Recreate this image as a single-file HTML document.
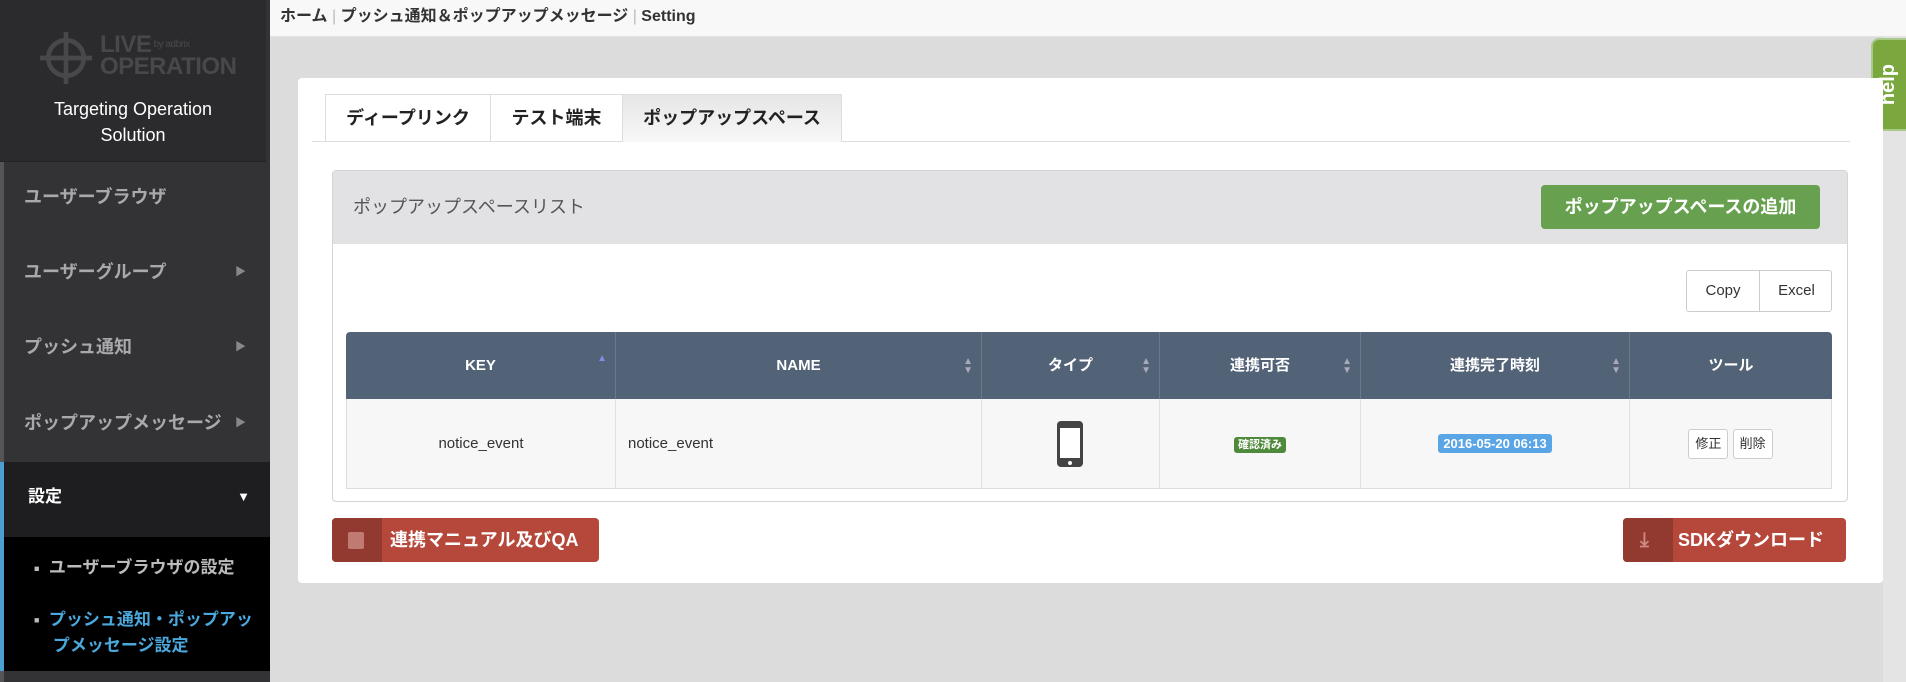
<!DOCTYPE html>
<html><head><meta charset="utf-8"><style>
*{box-sizing:border-box;margin:0;padding:0}
body{width:1906px;height:682px;overflow:hidden;background:#dcdcdd;font-family:"Liberation Sans","Noto Sans CJK JP",sans-serif;position:relative}
.abs{position:absolute}
#side{left:0;top:0;width:270px;height:682px;background:#333336;border-left:4px solid #555}
#logo{left:0;top:0;width:266px;height:162px;background:#2b2b2d;border-bottom:1px solid #222;color:#fff;text-align:center}
.mi{left:0;width:266px;height:75px;color:#a9a9ab;font-weight:bold;font-size:18px;padding-left:24px;line-height:75px}
.arr{position:absolute;right:20px;top:0;font-size:11px;color:#888}
#top{left:270px;top:0;width:1636px;height:37px;background:#f8f8f8;border-bottom:1px solid #e2e2e2;font-size:16px;font-weight:bold;color:#333;line-height:34px;padding-left:10px}
#card{left:298px;top:78px;width:1585px;height:505px;background:#fff;border-radius:4px}
.tab{top:94px;height:47px;border:1px solid #ddd;border-bottom:none;font-size:18px;font-weight:bold;color:#222;text-align:center;line-height:47px;background:#fff}
#panel{left:332px;top:170px;width:1516px;height:332px;border:1px solid #d4d4d4;border-radius:4px;background:#fff}
.hd{top:332px;height:67px;background:#526378;color:#fff;font-weight:bold;font-size:15px;line-height:67px;text-align:center}
.rw{top:399px;height:90px;background:#f7f7f7;font-size:15px;color:#333;line-height:90px;text-align:center;border-bottom:1px solid #ddd}
.sort{position:absolute;right:8px;top:0;font-size:10px;color:#aab;line-height:9px;padding-top:25px}
.btn{color:#fff;font-size:18px;font-weight:bold;border-radius:4px}
</style></head><body>
<div id="side" class="abs"></div>
<div id="logo" class="abs">
 <svg class="abs" style="left:38px;top:30px" width="56" height="56" viewBox="0 0 60 60"><circle cx="30" cy="30" r="19" fill="none" stroke="#48484a" stroke-width="5"/><path d="M30 2V58M2 30H58" stroke="#48484a" stroke-width="5"/><circle cx="30" cy="30" r="2" fill="#48484a"/></svg>
 <div class="abs" style="left:100px;top:34px;color:#48484a;font-weight:bold;font-size:24px;line-height:22px;text-align:left;letter-spacing:-0.5px">LIVE<span style="font-size:10px;font-weight:normal;vertical-align:top"> by adbrix</span><br>OPERATION</div>
 <div class="abs" style="left:0;top:96px;width:266px;font-size:18px;line-height:26px">Targeting Operation<br>Solution</div>
</div>
<div class="abs mi" style="top:160px">ユーザーブラウザ</div>
<div class="abs mi" style="top:235px">ユーザーグループ<span class="arr">▶</span></div>
<div class="abs mi" style="top:310px">プッシュ通知<span class="arr">▶</span></div>
<div class="abs mi" style="top:386px">ポップアップメッセージ<span class="arr">▶</span></div>
<div class="abs" style="left:0;top:462px;width:270px;height:75px;background:#1e1e20;border-left:4px solid #4aa0d0;color:#fff;font-weight:bold;font-size:17px;line-height:70px;padding-left:24px">設定<span style="position:absolute;right:20px;font-size:13px">▼</span></div>
<div class="abs" style="left:0;top:537px;width:270px;height:134px;background:#000;border-left:4px solid #4aa0d0;font-weight:bold;font-size:17px">
 <div class="abs" style="left:30px;top:16px;color:#bbb"><span style="font-size:9px;vertical-align:middle">■</span>&nbsp; ユーザーブラウザの設定</div>
 <div class="abs" style="left:30px;top:70px;color:#4aa8dd;line-height:25px;width:240px;white-space:nowrap;overflow:hidden"><span style="font-size:9px;color:#bbb;vertical-align:middle">■</span>&nbsp; プッシュ通知・ポップアッ<br>&nbsp;&nbsp;&nbsp;&nbsp;プメッセージ設定</div>
</div>
<div id="top" class="abs">ホーム <span style="color:#bbb;font-weight:normal">|</span> プッシュ通知＆ポップアップメッセージ <span style="color:#bbb;font-weight:normal">|</span> Setting</div>
<div class="abs" style="left:1883px;top:37px;width:23px;height:645px;background:#e4e4e4"></div>
<div class="abs" style="left:1871px;top:38px;width:40px;height:93px;background:#7aa83e;border:2px solid #a8c98a;border-radius:8px 0 0 8px;display:flex;align-items:center;justify-content:center;padding-right:6px"><span style="writing-mode:vertical-rl;transform:rotate(180deg);color:#fff;font-weight:bold;font-size:20px">help</span></div>
<div id="card" class="abs"></div>
<div class="abs" style="left:312px;top:141px;width:1538px;height:1px;background:#ddd"></div>
<div class="abs tab" style="left:325px;width:166px">ディープリンク</div>
<div class="abs tab" style="left:490px;width:133px">テスト端末</div>
<div class="abs tab" style="left:622px;width:220px;background:linear-gradient(#e6e6e6,#f8f8f8);height:48px">ポップアップスペース</div>
<div id="panel" class="abs"><div style="height:73px;background:#e2e2e4;font-size:18px;color:#555;padding:22px 0 0 20px">ポップアップスペースリスト</div></div>
<div class="abs btn" style="left:1541px;top:185px;width:279px;height:44px;background:#67a150;line-height:44px;text-align:center">ポップアップスペースの追加</div>
<div class="abs" style="left:1686px;top:270px;width:146px;height:42px;border:1px solid #ccc;border-radius:3px;font-size:15px;color:#333;line-height:40px"><span style="position:absolute;left:0;width:73px;text-align:center;border-right:1px solid #ccc">Copy</span><span style="position:absolute;left:73px;width:73px;text-align:center">Excel</span></div>
<div class="abs hd" style="left:346px;width:270px;border-radius:4px 0 0 0;border-right:1px solid #6a7a8c">KEY<span class="sort" style="color:#7f8fe0;padding-top:22px">▲</span></div>
<div class="abs hd" style="left:616px;width:366px;border-right:1px solid #6a7a8c">NAME<span class="sort">▲<br>▼</span></div>
<div class="abs hd" style="left:982px;width:178px;border-right:1px solid #6a7a8c">タイプ<span class="sort">▲<br>▼</span></div>
<div class="abs hd" style="left:1160px;width:201px;border-right:1px solid #6a7a8c">連携可否<span class="sort">▲<br>▼</span></div>
<div class="abs hd" style="left:1361px;width:269px;border-right:1px solid #6a7a8c">連携完了時刻<span class="sort">▲<br>▼</span></div>
<div class="abs hd" style="left:1630px;width:202px;border-radius:0 4px 0 0">ツール</div>
<div class="abs rw" style="left:346px;width:270px;border-right:1px solid #e2e2e2;border-left:1px solid #ddd">notice_event</div>
<div class="abs rw" style="left:616px;width:366px;border-right:1px solid #e2e2e2;text-align:left;padding-left:12px">notice_event</div>
<div class="abs rw" style="left:982px;width:178px;border-right:1px solid #e2e2e2"><svg style="position:absolute;left:74px;top:21px" width="28" height="48" viewBox="0 0 28 48"><rect x="1" y="1" width="26" height="46" rx="4" fill="#444"/><rect x="4" y="8" width="20" height="30" fill="#fff"/><circle cx="14" cy="43" r="2" fill="#fff"/></svg></div>
<div class="abs rw" style="left:1160px;width:201px;border-right:1px solid #e2e2e2"><span style="background:#4f8a3c;color:#fff;font-size:11px;font-weight:bold;padding:2px 4px;border-radius:3px">確認済み</span></div>
<div class="abs rw" style="left:1361px;width:269px;border-right:1px solid #e2e2e2"><span style="background:#5aa5e6;color:#fff;font-size:13px;font-weight:bold;padding:2px 5px;border-radius:3px">2016-05-20 06:13</span></div>
<div class="abs rw" style="left:1630px;width:202px;border-right:1px solid #ddd"><span style="display:inline-block;line-height:28px;border:1px solid #ccc;background:#fff;font-size:13px;padding:0 6px;border-radius:3px">修正</span> <span style="display:inline-block;line-height:28px;border:1px solid #ccc;background:#fff;font-size:13px;padding:0 6px;border-radius:3px">削除</span></div>
<div class="abs btn" style="left:332px;top:518px;width:267px;height:44px;background:#b5483b;line-height:44px;overflow:hidden"><span style="position:absolute;left:0;top:0;width:50px;height:44px;background:#923930"></span><span style="position:absolute;left:16px;top:14px;width:16px;height:17px;background:#c07a72;border-radius:2px"></span><span style="position:absolute;left:58px">連携マニュアル及びQA</span></div>
<div class="abs btn" style="left:1623px;top:518px;width:223px;height:44px;background:#b5483b;line-height:44px;overflow:hidden"><span style="position:absolute;left:0;top:0;width:50px;height:44px;background:#923930"></span><span style="position:absolute;left:17px;color:#d08a82;font-size:20px">⤓</span><span style="position:absolute;left:55px">SDKダウンロード</span></div>
</body></html>
